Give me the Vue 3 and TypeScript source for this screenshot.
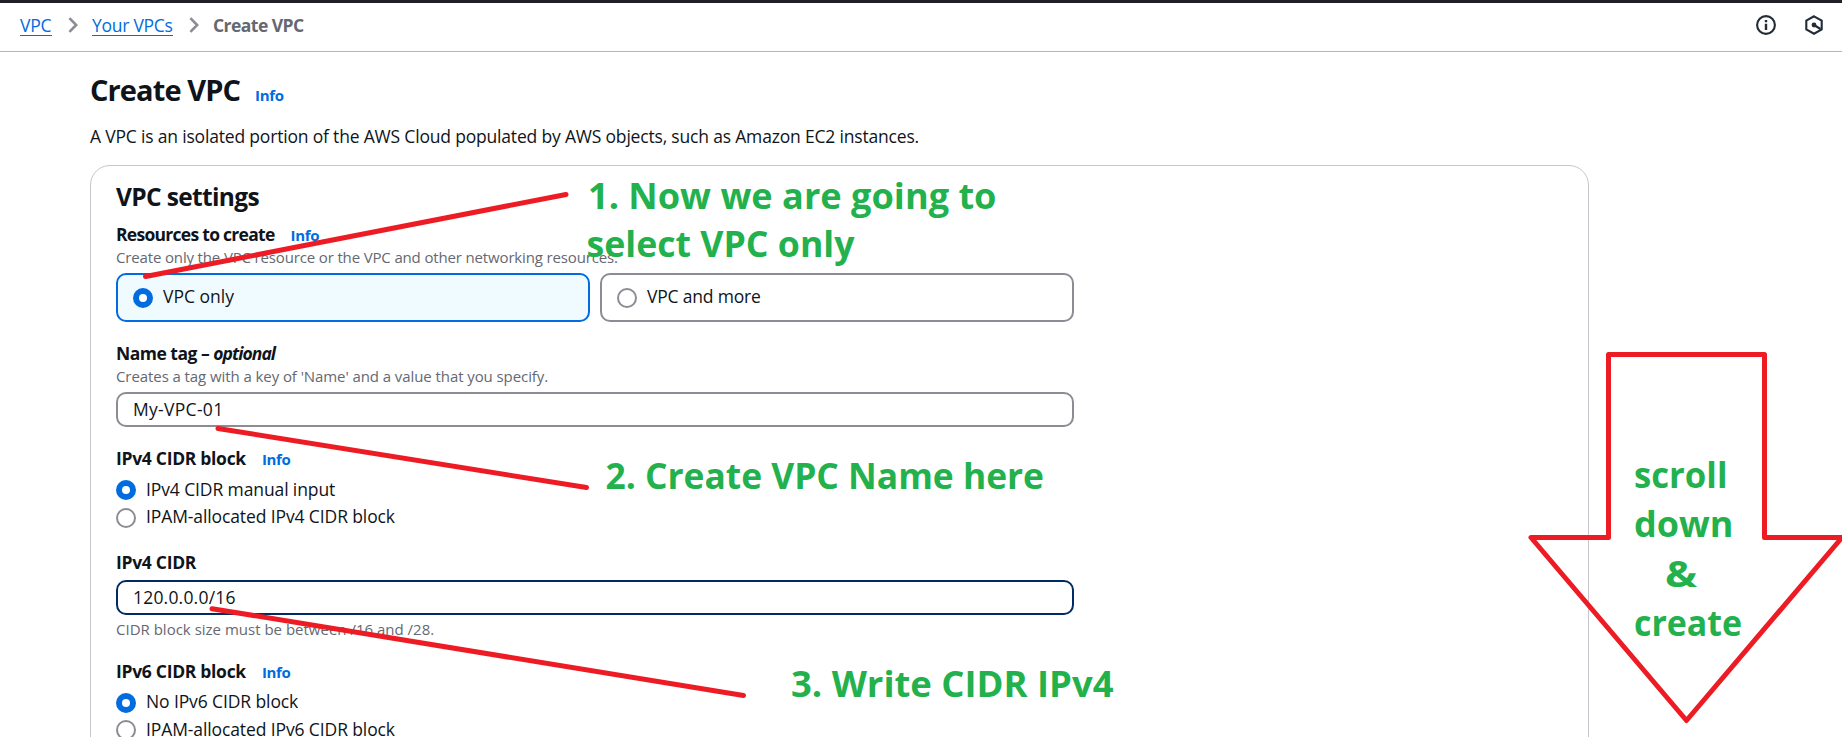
<script setup lang="ts">
interface Note { text: string; x: number; y: number; width: number }

const radios4 = [
  { label: 'IPv4 CIDR manual input', checked: true },
  { label: 'IPAM-allocated IPv4 CIDR block', checked: false },
]
const radios6 = [
  { label: 'No IPv6 CIDR block', checked: true },
  { label: 'IPAM-allocated IPv6 CIDR block', checked: false },
]

const notes: Note[] = [
  { text: '1. Now we are going to', x: 588, y: 209, width: 408.5 },
  { text: 'select VPC only', x: 586.5, y: 257, width: 268 },
  { text: '2. Create VPC Name here', x: 605.5, y: 488.5, width: 438.5 },
  { text: '3. Write CIDR IPv4', x: 791, y: 697, width: 322.5 },
  { text: 'scroll', x: 1634, y: 487.5, width: 93.5 },
  { text: 'down', x: 1634, y: 536.5, width: 99.5 },
  { text: '&', x: 1665, y: 586.5, width: 32 },
  { text: 'create', x: 1634, y: 636, width: 108 },
]
</script>

<template>
  <div class="page">
    <header class="topbar">
      <nav class="crumbs">
        <a class="c1">VPC</a>
        <svg class="chev" viewBox="0 0 10 16"><path d="M1.4 1.2 8.2 8 1.4 14.8" /></svg>
        <a class="c2">Your VPCs</a>
        <svg class="chev" viewBox="0 0 10 16"><path d="M1.4 1.2 8.2 8 1.4 14.8" /></svg>
        <span class="current">Create VPC</span>
      </nav>
      <div class="tools">
        <svg viewBox="0 0 20 20">
          <circle cx="10" cy="10" r="8.9" />
          <path d="M10 8.8V15M10 5V7.2" class="i" />
        </svg>
        <svg viewBox="0 0 20 20">
          <path d="M10 1.3 17.7 5.6V14.4L10 18.7 2.3 14.4V5.6Z" />
          <path d="M10 10 16.5 14" />
          <circle cx="10" cy="10" r="2.4" class="dot" />
        </svg>
      </div>
    </header>

    <main>
      <div class="title">
        <h1>Create VPC</h1>
        <a class="info">Info</a>
      </div>
      <p class="desc">A VPC is an isolated portion of the AWS Cloud populated by AWS objects, such as Amazon EC2 instances.</p>

      <section class="card">
        <h2>VPC settings</h2>

        <div class="field resources">
          <div class="label"><span class="wide">Resources to create</span><a class="info">Info</a></div>
          <div class="hint h1st">Create only the VPC resource or the VPC and other networking resources.</div>
          <div class="tiles">
            <div class="tile selected"><i class="radio on"></i><span class="t1">VPC only</span></div>
            <div class="tile"><i class="radio"></i><span>VPC and more</span></div>
          </div>
        </div>

        <div class="field name">
          <div class="label"><span class="tag">Name tag – <em>optional</em></span></div>
          <div class="hint h2nd">Creates a tag with a key of 'Name' and a value that you specify.</div>
          <div class="input"><span class="v1">My-VPC-01</span></div>
        </div>

        <div class="field block4">
          <div class="label"><span>IPv4 CIDR block</span><a class="info">Info</a></div>
          <div class="options">
            <div v-for="r in radios4" :key="r.label" class="option">
              <i class="radio" :class="{ on: r.checked }"></i><span>{{ r.label }}</span>
            </div>
          </div>
        </div>

        <div class="field cidr4">
          <div class="label"><span>IPv4 CIDR</span></div>
          <div class="input focus"><span class="v2">120.0.0.0/16</span></div>
          <div class="hint">CIDR block size must be between /16 and /28.</div>
        </div>

        <div class="field block6">
          <div class="label"><span>IPv6 CIDR block</span><a class="info">Info</a></div>
          <div class="options">
            <div v-for="r in radios6" :key="r.label" class="option">
              <i class="radio" :class="{ on: r.checked }"></i><span>{{ r.label }}</span>
            </div>
          </div>
        </div>
      </section>
    </main>

    <svg class="markup" viewBox="0 0 1842 737" width="1842" height="737">
      <g class="strokes">
        <path d="M145.5 276.5 566 194.5" />
        <path d="M218 428.5 586.5 487.5" />
        <path d="M212 608.7 743.5 695.5" />
        <path d="M1608.5 354.5H1764.5V537.5H1842L1686.5 720.5 1531 537.5H1608.5Z" />
      </g>
      <text
        v-for="n in notes"
        :key="n.text"
        :x="n.x"
        :y="n.y"
        :textLength="n.width"
        lengthAdjust="spacingAndGlyphs"
      >{{ n.text }}</text>
    </svg>
  </div>
</template>

<style>
body {
  margin: 0;
  background: #fff;
}
</style>

<style scoped>
.page {
  position: relative;
  width: 1842px;
  height: 737px;
  overflow: hidden;
  background: #fff;
  color: #0f141a;
  font: 17.5px/24px "Open Sans", "Noto Sans", sans-serif;
}
.topbar {
  box-sizing: border-box;
  height: 52px;
  border-top: 3px solid #231f26;
  border-bottom: 1px solid #b4b4bb;
  padding: 10px 18px 0 20px;
  display: flex;
  justify-content: space-between;
}
.crumbs { display: flex; }
.crumbs a {
  height: 22px;
  border-bottom: 1px solid #006ce0;
  color: #006ce0;
}
.c1 { width: 32px; letter-spacing: -0.2px; }
.c2 { width: 81px; letter-spacing: -0.27px; }
.crumbs a, .current { white-space: nowrap; }
.current {
  color: #656871;
  font-weight: 700;
  letter-spacing: -0.54px;
}
.chev {
  width: 10px;
  height: 16px;
  margin: 4px 14.5px 0 15.5px;
  fill: none;
  stroke: #8c8c94;
  stroke-width: 2.6;
}
.tools {
  display: flex;
  gap: 28px;
  padding-top: 2px;
}
.tools svg {
  width: 20px;
  height: 20px;
  fill: none;
  stroke: #232b37;
  stroke-width: 2.1;
}
.tools .i { stroke-width: 2.4; }
.tools .dot { fill: #232b37; stroke: none; }

main { padding: 20px 0 0 90px; }
.title {
  display: flex;
  align-items: baseline;
  height: 36px;
  gap: 15px;
}
h1, h2, p { margin: 0; }
h1 {
  font-size: 29px;
  line-height: 36px;
  letter-spacing: -0.9px;
}
.info {
  color: #006ce0;
  font-size: 15px;
  font-weight: 700;
  line-height: 20px;
  letter-spacing: -0.35px;
}
.desc {
  margin-top: 16px;
  letter-spacing: -0.185px;
}
.card {
  box-sizing: border-box;
  width: 1499px;
  height: 700px;
  margin-top: 17px;
  padding: 16px 25px 0;
  border: 1px solid #c6c6cd;
  border-radius: 20px;
}
h2 {
  font-size: 24.5px;
  line-height: 30px;
  letter-spacing: -0.65px;
}
.field { width: 958px; }
.resources { margin-top: 10px; }
.name { margin-top: 19px; }
.block4 { margin-top: 19px; }
.cidr4 { margin-top: 20px; }
.block6 { margin-top: 20px; }
.label {
  display: flex;
  align-items: baseline;
  height: 24px;
  gap: 16px;
  font-weight: 700;
  letter-spacing: -0.3px;
}
.label .wide { letter-spacing: -0.72px; }
.label .tag { letter-spacing: -0.5px; }
.label em { letter-spacing: -0.95px; }
.hint {
  margin-top: 1px;
  color: #656871;
  font-size: 15px;
  line-height: 20px;
}
.h1st { letter-spacing: -0.15px; }
.h2nd { letter-spacing: -0.08px; }
.tiles {
  display: grid;
  grid-template-columns: 1fr 1fr;
  gap: 10px;
  margin-top: 6px;
}
.tile {
  box-sizing: border-box;
  height: 49px;
  border: 2px solid #8c8c94;
  border-radius: 10px;
  padding-left: 15px;
  display: flex;
  align-items: center;
  gap: 10px;
  letter-spacing: -0.2px;
}
.tile span { padding-bottom: 3px; }
.option span { padding-bottom: 3px; }
.tile .t1 { letter-spacing: 0; }
.tile.selected {
  border-color: #006ce0;
  background: #f0fbff;
}
.radio {
  box-sizing: border-box;
  width: 20px;
  height: 20px;
  border: 2px solid #8c8c94;
  border-radius: 50%;
  background: #fff;
}
.radio.on { border: 6px solid #006ce0; }
.input {
  box-sizing: border-box;
  height: 35px;
  margin-top: 6px;
  border: 2px solid #8c8c94;
  border-radius: 10px;
  padding: 3px 15px 0;
}
.input.focus {
  border-color: #002b66;
}
.cidr4 .hint { margin-top: 4px; }
.v1 { letter-spacing: 0.3px; }
.v2 { letter-spacing: 0.2px; }
.options {
  display: flex;
  flex-direction: column;
  gap: 3.5px;
  margin-top: 8px;
}
.option {
  display: flex;
  align-items: center;
  gap: 10px;
  height: 24px;
  letter-spacing: -0.11px;
}
.markup {
  position: absolute;
  left: 0;
  top: 0;
}
.strokes {
  fill: none;
  stroke: #ed1c24;
  stroke-width: 5;
  stroke-linecap: round;
  stroke-linejoin: round;
}
.markup text {
  fill: #22b14c;
  font-size: 36.5px;
  font-weight: 700;
}
</style>
